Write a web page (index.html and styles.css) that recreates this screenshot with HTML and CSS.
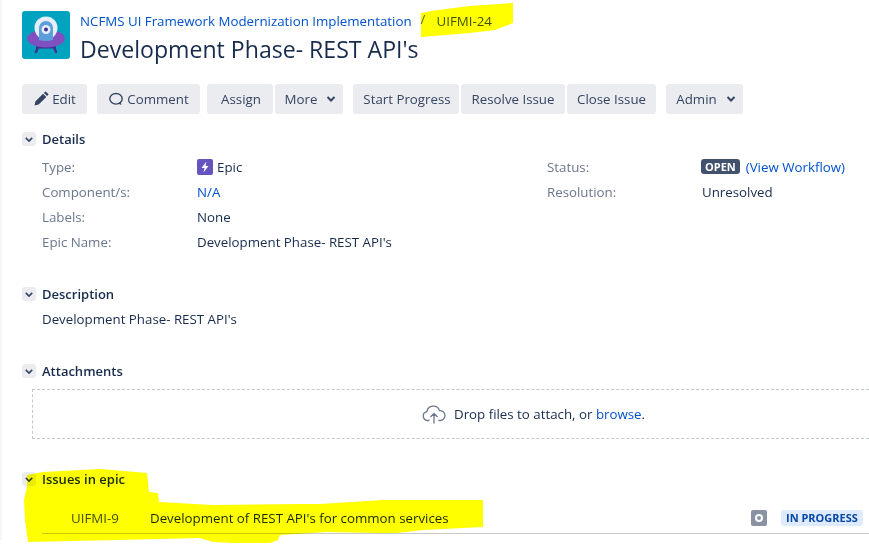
FILE: index.html
```html
<!DOCTYPE html>
<html lang="en">
<head>
<meta charset="utf-8">
<title>Development Phase- REST API's</title>
<link rel="stylesheet" href="styles.css">
</head>
<body>
<div class="page">
  <header class="head">
    <svg class="avatar" viewBox="0 0 48 48" width="48" height="48">
      <rect width="48" height="48" rx="3" fill="#00a3bf"/>
      <path d="M16 36l-2 5M32 36l2 5" stroke="#403294" stroke-width="2.500" stroke-linecap="round"/>
      <rect x="14" y="35" width="20" height="2.500" fill="#403294"/>
      <ellipse cx="24" cy="27.500" rx="19" ry="9" fill="#8150c0"/>
      <circle cx="24" cy="17" r="11.500" fill="#e8eef8"/>
      <path d="M17 29V17a7 7 0 0 1 14 0v12q-7 2-14 0z" fill="#5a9fdc"/>
      <circle cx="24" cy="18.500" r="4.500" fill="#e8eef8"/>
      <circle cx="24" cy="18.500" r="2" fill="#403294"/>
    </svg>
    <div class="head-text">
      <div class="crumbs"><a class="link" href="#">NCFMS UI Framework Modernization Implementation</a><span class="slash">/</span><a class="crumb-key" href="#">UIFMI-24</a></div>
      <h1 class="title">Development Phase- REST API's</h1>
    </div>
  </header>

  <div class="toolbar">
    <div class="group"><button class="btn btn-edit"><svg class="btn-icon" viewBox="0 0 16 16" width="16" height="16"><path d="M1.500 14.500l1-4.200 7.600-7.600 3.200 3.200-7.600 7.600zM10.900 1.900l1-1a1 1 0 0 1 1.400 0l1.800 1.800a1 1 0 0 1 0 1.400l-1 1z" fill="#344563"/></svg>Edit</button></div>
    <div class="group"><button class="btn btn-comment"><svg class="btn-icon" viewBox="0 0 16 16" width="16" height="16"><ellipse cx="8" cy="7.800" rx="6.200" ry="5.300" fill="none" stroke="#344563" stroke-width="1.400"/><path d="M10 12.500l3.500 1.500-1-3" fill="#344563"/></svg>Comment</button></div>
    <div class="group"><button class="btn btn-assign">Assign</button><button class="btn btn-more">More<svg class="chev" viewBox="0 0 10 6" width="10" height="6"><path d="M1.500 1l3.500 3.500L8.500 1" fill="none" stroke="#344563" stroke-width="2"/></svg></button></div>
    <div class="group"><button class="btn btn-start">Start Progress</button><button class="btn btn-resolve">Resolve Issue</button><button class="btn btn-close">Close Issue</button></div>
    <div class="group"><button class="btn btn-admin">Admin<svg class="chev" viewBox="0 0 10 6" width="10" height="6"><path d="M1.500 1l3.500 3.500L8.500 1" fill="none" stroke="#344563" stroke-width="2"/></svg></button></div>
  </div>

  <section class="module details">
    <h2 class="mod-head"><span class="toggle"><svg viewBox="0 0 10 6" width="8" height="5"><path d="M1 1l4 4 4-4" fill="none" stroke="#344563" stroke-width="2"/></svg></span>Details</h2>
    <div class="fields">
      <div class="col-left">
        <span class="label">Type:</span><span class="value"><svg class="type-icon" viewBox="0 0 16 16" width="16" height="16"><rect width="16" height="16" rx="2" fill="#6554c0"/><path d="M9.500 2.500L4.500 9h3l-1 4.500L11.500 7h-3z" fill="#fff"/></svg>Epic</span>
        <span class="label">Component/s:</span><span class="value"><a class="link" href="#">N/A</a></span>
        <span class="label">Labels:</span><span class="value">None</span>
        <span class="label">Epic Name:</span><span class="value">Development Phase- REST API's</span>
      </div>
      <div class="col-right">
        <span class="label">Status:</span><span class="value"><span class="lozenge-open">OPEN</span><a class="link" href="#">(View Workflow)</a></span>
        <span class="label">Resolution:</span><span class="value">Unresolved</span>
      </div>
    </div>
  </section>

  <section class="module description">
    <h2 class="mod-head"><span class="toggle"><svg viewBox="0 0 10 6" width="8" height="5"><path d="M1 1l4 4 4-4" fill="none" stroke="#344563" stroke-width="2"/></svg></span>Description</h2>
    <p class="desc-text">Development Phase- REST API's</p>
  </section>

  <section class="module attachments">
    <h2 class="mod-head"><span class="toggle"><svg viewBox="0 0 10 6" width="8" height="5"><path d="M1 1l4 4 4-4" fill="none" stroke="#344563" stroke-width="2"/></svg></span>Attachments</h2>
    <div class="dropzone">
      <svg class="cloud" viewBox="0 0 24 20" width="24" height="20"><path d="M7.500 16.500H5.500a4.500 4.500 0 0 1-.6-8.900 6.500 6.500 0 0 1 12.600-1 4.800 4.800 0 0 1 1 9.900h-2M12 19.500V10M8.500 13l3.500-3.500 3.500 3.500" fill="none" stroke="#6b778c" stroke-width="1.300"/></svg>
      <span>Drop files to attach, or <a class="link" href="#">browse</a>.</span>
    </div>
  </section>

  <section class="module epic">
    <h2 class="mod-head"><span class="toggle"><svg viewBox="0 0 10 6" width="8" height="5"><path d="M1 1l4 4 4-4" fill="none" stroke="#344563" stroke-width="2"/></svg></span>Issues in epic</h2>
    <div class="issue-row">
      <span class="issue-key">UIFMI-9</span>
      <span class="issue-sum">Development of REST API's for common services</span>
      <svg class="prio" viewBox="0 0 16 16" width="16" height="16"><rect width="16" height="16" rx="2" fill="#8993a4"/><circle cx="8" cy="8" r="3" fill="none" stroke="#fff" stroke-width="2"/></svg>
      <span class="lozenge-prog">IN PROGRESS</span>
    </div>
  </section>
</div>
<svg class="marker" viewBox="0 0 869 546" width="869" height="546" aria-hidden="true">
  <path d="M421 13L438 10 470 6 513 3 513 23 495 30 470 33 421 37z" fill="#ffff00"/>
  <path d="M27 475L43 472 100 469 147 473 149 492 158 493 159 502 213 505 300 504 320 504 383 500 483 500 483 527 423 530 397 533 377 533 327 532 280 535 278 540 270 543 233 543 213 542 200 538 117 540 28 542 25 520 24 500 27 487z" fill="#ffff00"/>
</svg>
</body>
</html>
```
FILE: styles.css
```css
* { box-sizing: border-box; }
html, body { margin: 0; padding: 0; background: #fff; }
body {
  width: 869px;
  height: 546px;
  overflow: hidden;
  font-family: "Open Sans", "Noto Sans", sans-serif;
  font-size: 13.300px;
  color: #172b4d;
  position: relative;
}
.page { height: 540px; padding: 11px 0 0 20px; border-left: 2px solid #f7f7f8; }
.link { color: #0052cc; text-decoration: none; }
.head { display: flex; gap: 10px; height: 48px; }
.avatar { flex: none; }
.head-text { display: flex; flex-direction: column; }
.crumbs { height: 20px; line-height: 20px; white-space: nowrap; }
.slash { color: #5e6c84; margin: 0 11px 0 9px; position: relative; top: -2px; }
.crumb-key { color: #42526e; text-decoration: none; }
.title { margin: 0; font-size: 23.100px; line-height: 36px; font-weight: 500; color: #172b4d; white-space: nowrap; }
.toolbar { display: flex; gap: 10px; margin-top: 25px; }
.group { display: flex; gap: 2px; }
.toolbar .group:nth-child(2) { margin-right: -3px; }
.btn {
  display: flex; align-items: center; justify-content: center;
  height: 30px; padding: 0;
  border: 0; border-radius: 3px;
  background: #ebecf0; color: #344563;
  font: inherit; white-space: nowrap;
}
.btn-edit { width: 65px; }
.btn-comment { width: 103px; }
.btn-assign { width: 66px; padding-left: 2px; }
.btn-more { width: 68px; padding-left: 3px; }
.btn-start { width: 106px; padding-left: 2px; }
.btn-resolve { width: 104px; }
.btn-close { width: 89px; }
.btn-admin { width: 77px; padding-left: 3px; }
.btn-icon { margin-right: 3px; }
.chev { margin-left: 9px; }
.module { position: relative; }
.mod-head {
  display: flex; align-items: center; gap: 6px;
  margin: 0; height: 20px;
  font-size: 13px; font-weight: 600; line-height: 20px; color: #172b4d;
}
.toggle {
  display: flex; align-items: center; justify-content: center;
  width: 14px; height: 14px; border-radius: 3px; background: #ebecf0;
}
.details { margin-top: 15px; }
.fields { display: flex; padding: 5px 0 0 20px; }
.col-left, .col-right { display: grid; align-content: start; grid-auto-rows: 25px; align-items: center; }
.col-left { grid-template-columns: 155px 350px; }
.col-right { grid-template-columns: 155px auto; }
.label { color: #6b778c; }
.value { display: flex; align-items: center; white-space: pre; }
.type-icon { margin: 0 4px 0 0; }
.lozenge-open {
  display: inline-block; background: #42526e; color: #fff; border-radius: 3px;
  font-size: 11px; font-weight: 700; line-height: 15px; padding: 0 4px;
  margin: 0 6px 0 -1px;
}
.description { margin-top: 30px; }
.desc-text { margin: 5px 0 0 20px; line-height: 20px; }
.attachments { margin-top: 32px; }
.dropzone {
  display: flex; align-items: center; gap: 8px;
  margin: 8px 0 0 10px; height: 50px; padding-left: 389px;
  border: 1px dashed #c1c7d0; border-right: 0;
}
.cloud { flex: none; }
.epic { margin-top: 30px; }
.issue-row {
  display: flex; align-items: center;
  margin: 14px 0 0 20px; height: 31px; padding-left: 29px;
  border-bottom: 1px solid #c8c8c8;
}
.issue-key { width: 79px; color: #42526e; }
.issue-sum { width: 601px; }
.prio { flex: none; }
.lozenge-prog {
  margin-left: 14px; background: #deebff; color: #0747a6; border-radius: 3px;
  font-size: 11px; font-weight: 700; line-height: 16px; padding: 0 5px; white-space: nowrap;
}
.marker { position: absolute; left: 0; top: 0; mix-blend-mode: multiply; pointer-events: none; }
```
